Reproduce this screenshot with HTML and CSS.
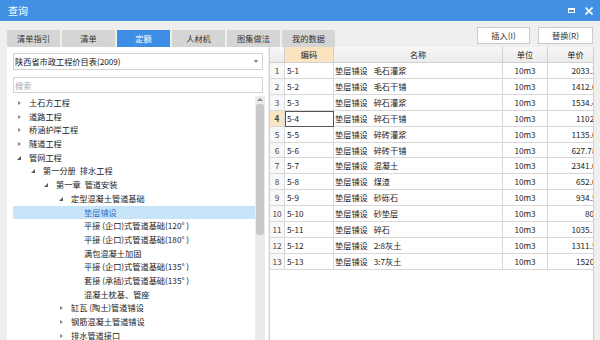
FILE: index.html
```html
<!DOCTYPE html>
<html lang="zh">
<head>
<meta charset="utf-8">
<title>查询</title>
<link rel="stylesheet" href="styles.css">
</head>
<body>
<div class="titlebar">
  <span class="title">查询</span>
  <div class="wbtns">
    <span class="restore"></span>
    <svg class="close" width="8" height="8" viewBox="0 0 8 8"><path d="M0.5 0.5L7.5 7.5M7.5 0.5L0.5 7.5" stroke="#fff" stroke-width="1.6"/></svg>
  </div>
</div>
<div class="toolbar">
  <div class="tabs">
    <div class="tab">清单指引</div>
    <div class="tab">清单</div>
    <div class="tab active">定额</div>
    <div class="tab">人材机</div>
    <div class="tab">图集做法</div>
    <div class="tab">我的数据</div>
  </div>
  <div class="btns">
    <div class="btn ins">插入(I)</div>
    <div class="btn rep">替换(R)</div>
  </div>
</div>
<div class="panes">
  <div class="left">
    <div class="select"><span>陕西省市政工程价目表(2009)</span><span class="caret"></span></div>
    <div class="search">搜索</div>
    <div class="treewrap">
      <div class="tree">
        <div class="node l0"><i class="arr c"></i>土石方工程</div>
        <div class="node l0"><i class="arr c"></i>道路工程</div>
        <div class="node l0"><i class="arr c"></i>桥涵护岸工程</div>
        <div class="node l0"><i class="arr c"></i>隧道工程</div>
        <div class="node l0"><i class="arr e"></i>管网工程</div>
        <div class="node l1"><i class="arr e"></i>第一分册&ensp;排水工程</div>
        <div class="node l2"><i class="arr e"></i>第一章&ensp;管道安装</div>
        <div class="node l3"><i class="arr e"></i>定型混凝土管道基础</div>
        <div class="node l4 sel"><i class="arr"></i>垫层铺设</div>
        <div class="node l4"><i class="arr"></i>平接 (企口)式管道基础(120° )</div>
        <div class="node l4"><i class="arr"></i>平接 (企口)式管道基础(180° )</div>
        <div class="node l4"><i class="arr"></i>满包混凝土加固</div>
        <div class="node l4"><i class="arr"></i>平接 (企口)式管道基础(135° )</div>
        <div class="node l4"><i class="arr"></i>套接 (承插)式管道基础(135° )</div>
        <div class="node l4"><i class="arr"></i>混凝土枕基、管座</div>
        <div class="node l3"><i class="arr c"></i>缸瓦 (陶土)管道铺设</div>
        <div class="node l3"><i class="arr c"></i>钢筋混凝土管道铺设</div>
        <div class="node l3"><i class="arr c"></i>排水管道接口</div>
      </div>
      <div class="vscroll"><span class="up"></span><span class="thumb"></span></div>
    </div>
  </div>
  <div class="right">
    <table class="grid">
      <colgroup><col class="c-rn"><col class="c-code"><col class="c-name"><col class="c-unit"><col class="c-price"></colgroup>
      <thead>
        <tr><th></th><th class="hl">编码</th><th>名称</th><th>单位</th><th>单价</th></tr>
      </thead>
      <tbody>
        <tr><td class="rn">1</td><td class="code">5-1</td><td class="name">垫层铺设&ensp;&nbsp;毛石灌浆</td><td class="unit">10m3</td><td class="price">2033.35</td></tr>
        <tr><td class="rn">2</td><td class="code">5-2</td><td class="name">垫层铺设&ensp;&nbsp;毛石干铺</td><td class="unit">10m3</td><td class="price">1412.04</td></tr>
        <tr><td class="rn">3</td><td class="code">5-3</td><td class="name">垫层铺设&ensp;&nbsp;碎石灌浆</td><td class="unit">10m3</td><td class="price">1534.42</td></tr>
        <tr><td class="rn cur">4</td><td class="code focus">5-4</td><td class="name">垫层铺设&ensp;&nbsp;碎石干铺</td><td class="unit">10m3</td><td class="price">1102.5</td></tr>
        <tr><td class="rn">5</td><td class="code">5-5</td><td class="name">垫层铺设&ensp;&nbsp;碎砖灌浆</td><td class="unit">10m3</td><td class="price">1135.01</td></tr>
        <tr><td class="rn">6</td><td class="code">5-6</td><td class="name">垫层铺设&ensp;&nbsp;碎砖干铺</td><td class="unit">10m3</td><td class="price">627.784</td></tr>
        <tr><td class="rn">7</td><td class="code">5-7</td><td class="name">垫层铺设&ensp;&nbsp;混凝土</td><td class="unit">10m3</td><td class="price">2341.08</td></tr>
        <tr><td class="rn">8</td><td class="code">5-8</td><td class="name">垫层铺设&ensp;&nbsp;煤渣</td><td class="unit">10m3</td><td class="price">652.09</td></tr>
        <tr><td class="rn">9</td><td class="code">5-9</td><td class="name">垫层铺设&ensp;&nbsp;砂砾石</td><td class="unit">10m3</td><td class="price">934.53</td></tr>
        <tr><td class="rn">10</td><td class="code">5-10</td><td class="name">垫层铺设&ensp;&nbsp;砂垫层</td><td class="unit">10m3</td><td class="price">80.5</td></tr>
        <tr><td class="rn">11</td><td class="code">5-11</td><td class="name">垫层铺设&ensp;&nbsp;碎石</td><td class="unit">10m3</td><td class="price">1035.16</td></tr>
        <tr><td class="rn">12</td><td class="code">5-12</td><td class="name">垫层铺设&ensp;&nbsp;2:8灰土</td><td class="unit">10m3</td><td class="price">1311.52</td></tr>
        <tr><td class="rn">13</td><td class="code">5-13</td><td class="name">垫层铺设&ensp;&nbsp;3:7灰土</td><td class="unit">10m3</td><td class="price">1520.3</td></tr>
      </tbody>
    </table>
  </div>
</div>
</body>
</html>
```

FILE: styles.css
```css
* { box-sizing: border-box; margin: 0; padding: 0; }
html, body { width: 600px; height: 340px; overflow: hidden; }
body {
  background: #efefef;
  font-family: "Noto Sans CJK SC", "Noto Sans", sans-serif;
  font-size: 8.2px;
  color: #222;
}
.titlebar {
  height: 21px;
  background: #4190e4;
  display: flex;
  align-items: center;
  justify-content: space-between;
  padding: 0 7px 0 8px;
  color: #fff;
}
.title { font-size: 10px; line-height: 21px; }
.wbtns { display: flex; align-items: center; gap: 10px; }
.restore { width: 7px; height: 5px; border: 1px solid #fff; border-top-width: 2px; }
.close { display: block; }

.toolbar {
  height: 26px;
  display: flex;
  justify-content: space-between;
  padding: 0 7px;
}
.tabs { display: flex; gap: 2px; align-self: flex-end; }
.tab {
  width: 53px;
  height: 17px;
  line-height: 17px;
  text-align: center;
  background: #d5d5d5;
  color: #333;
}
.tab.active { background: #3d8fe6; color: #fff; }
.btns { display: flex; gap: 8px; padding-top: 6px; }
.btn {
  height: 17px;
  line-height: 15px;
  border: 1px solid #cbcbcb;
  background: #fff;
  text-align: center;
  color: #333;
}
.btn.ins { width: 53px; }
.btn.rep { width: 55px; }

.panes { display: flex; gap: 1px; padding-left: 7px; height: 293px; }
.left { width: 261px; background: #fff; padding: 6px 0 0 6px; }
.select {
  width: 250px;
  height: 17px;
  border: 1px solid #d3d3d3;
  display: flex;
  align-items: center;
  justify-content: space-between;
  padding: 0 4px 0 1px;
  line-height: 15px;
}
.caret {
  width: 0; height: 0;
  border-top: 3px solid #777;
  border-left: 2.5px solid transparent;
  border-right: 2.5px solid transparent;
}
.search {
  width: 250px;
  height: 16px;
  margin-top: 7px;
  border: 1px solid #d3d3d3;
  color: #aaa;
  line-height: 14px;
  padding-left: 1px;
}
.treewrap { display: flex; margin-top: 3px; height: 250px; }
.tree { width: 242px; }
.node {
  height: 13.7px;
  line-height: 13.7px;
  display: flex;
  align-items: center;
  white-space: nowrap;
}
.node.sel { background: #c8e4f8; color: #2f6fc0; }
.l0 { padding-left: 3px; }
.l1 { padding-left: 17px; }
.l2 { padding-left: 30px; }
.l3 { padding-left: 45px; }
.l4 { padding-left: 58px; }
.arr { width: 13px; flex: none; height: 100%; display: flex; align-items: center; }
.arr.c::before {
  content: "";
  margin-left: 2px;
  width: 0; height: 0;
  border-left: 3px solid #8a8a8a;
  border-top: 2.5px solid transparent;
  border-bottom: 2.5px solid transparent;
}
.arr.e::before {
  content: "";
  margin-left: 1px;
  width: 0; height: 0;
  border-right: 4.5px solid #5a5a5a;
  border-top: 4.5px solid transparent;
}
.vscroll {
  width: 10px;
  background: #ebebeb;
  display: flex;
  flex-direction: column;
  align-items: center;
}
.up {
  margin-top: 2px;
  width: 0; height: 0;
  border-bottom: 3px solid #8a8a8a;
  border-left: 3px solid transparent;
  border-right: 3px solid transparent;
}
.thumb {
  margin-top: 3px;
  width: 8px;
  height: 131px;
  background: #c9c9c9;
  border-radius: 2px;
}

.right {
  width: 325px;
  background: #fff;
  border-left: 1px solid #cfcfcf;
  border-right: 1px solid #cfcfcf;
  overflow: hidden;
}
.grid {
  table-layout: fixed;
  width: 334px;
  border-collapse: separate;
  border-spacing: 0;
}
.c-rn { width: 15px; }
.c-code { width: 49px; }
.c-name { width: 169px; }
.c-unit { width: 45px; }
.c-price { width: 56px; }
.grid th, .grid td {
  border-right: 1px solid #d8d8d8;
  border-bottom: 1px solid #d8d8d8;
  white-space: nowrap;
  overflow: hidden;
  padding: 0;
}
.grid th {
  height: 16px;
  line-height: 15px;
  font-weight: normal;
  color: #222;
  background: linear-gradient(#f8f8f8, #ebebeb);
  text-align: center;
  border-color: #d0d0d0;
}
.grid th.hl { background: #fce3c0; }
.grid td { height: 15.9px; line-height: 14.9px; }
.rn { text-align: center; color: #444; background: #f8f8f8; }
.rn.cur { background: #fbe6c4; font-weight: bold; }
.code { padding-left: 2px !important; }
.code.focus { outline: 1px solid #555; outline-offset: -1px; }
.name { padding-left: 1px !important; }
.unit { text-align: center; }
.price { text-align: right; padding-right: 2px !important; }
```
